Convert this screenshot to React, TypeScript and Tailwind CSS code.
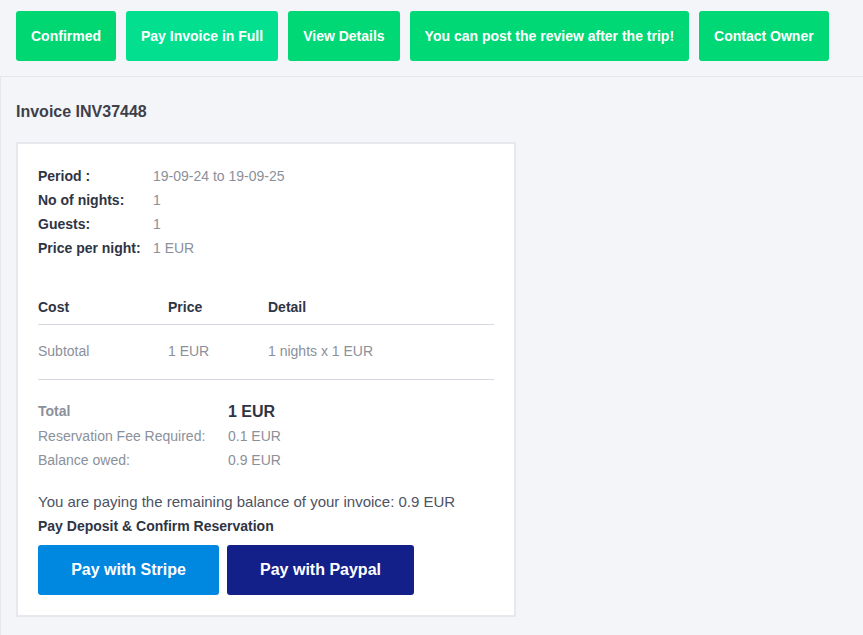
import React from 'react';

const topActions = [
  { label: 'Confirmed', tone: 'bg-[#00d672]' },
  { label: 'Pay Invoice in Full', tone: 'bg-[#02df8e]' },
  { label: 'View Details', tone: 'bg-[#00d775]' },
  { label: 'You can post the review after the trip!', tone: 'bg-[#00d775]' },
  { label: 'Contact Owner', tone: 'bg-[#00d775]' },
];

const details = [
  { label: 'Period :', value: '19-09-24 to 19-09-25' },
  { label: 'No of nights:', value: '1' },
  { label: 'Guests:', value: '1' },
  { label: 'Price per night:', value: '1 EUR' },
];

export default function App() {
  return (
    <div className="min-h-[635px] bg-[#f4f5f9] font-['Liberation_Sans',Arial,sans-serif] text-[14px]">
      <div className="flex gap-[10px] px-4 pt-[11px] pb-[15px] border-b border-[#e4e6eb]">
        {topActions.map(a => (
          <button
            key={a.label}
            className={`h-[50px] px-[15px] rounded-[3px] text-white font-bold text-[14px] ${a.tone}`}
          >
            {a.label}
          </button>
        ))}
      </div>

      <div className="border-l border-[#e6e8ee] pl-[15px] pr-4 pt-[23px] pb-5">
        <h2 className="text-[16px] leading-6 font-bold text-[#3d4049]">Invoice INV37448</h2>

        <div className="mt-[18px] w-[500px] bg-white border-2 border-[#e6e8ed] p-5">
          <div className="flex flex-col">
            {details.map(d => (
              <div key={d.label} className="flex leading-6">
                <span className="w-[115px] font-bold text-[#2f3444]">{d.label}</span>
                <span className="text-[#8b909a]">{d.value}</span>
              </div>
            ))}
          </div>

          <table className="mt-[30px] w-[456px] text-left border-collapse">
            <thead>
              <tr className="border-b border-[#d4d8df]">
                <th className="w-[130px] h-[34px] pt-[2px] font-bold text-[#2f3444]">Cost</th>
                <th className="w-[100px] h-[34px] pt-[2px] font-bold text-[#2f3444]">Price</th>
                <th className="h-[34px] pt-[2px] font-bold text-[#2f3444]">Detail</th>
              </tr>
            </thead>
            <tbody>
              <tr className="border-b border-[#d4d8df]">
                <td className="h-[55px] text-[#8b909a]">Subtotal</td>
                <td className="h-[55px] text-[#8b909a]">1 EUR</td>
                <td className="h-[55px] text-[#8b909a]">1 nights x 1 EUR</td>
              </tr>
            </tbody>
          </table>

          <div className="mt-[20px] flex flex-col text-[#8b909a]">
            <div className="flex items-center h-6">
              <span className="w-[190px] font-bold">Total</span>
              <span className="text-[16px] font-bold text-[#2f3444]">1 EUR</span>
            </div>
            <div className="flex items-center h-6 mt-[1px]">
              <span className="w-[190px]">Reservation Fee Required:</span>
              <span>0.1 EUR</span>
            </div>
            <div className="flex items-center h-6">
              <span className="w-[190px]">Balance owed:</span>
              <span>0.9 EUR</span>
            </div>
          </div>

          <p className="mt-[17px] leading-6 text-[15px] text-[#4d5363]">
            You are paying the remaining balance of your invoice: 0.9 EUR
          </p>
          <p className="leading-6 font-bold text-[#2f3444]">Pay Deposit &amp; Confirm Reservation</p>

          <div className="mt-[7px] flex gap-2">
            <button className="w-[181px] h-[50px] rounded-[3px] bg-[#0087e0] text-white font-bold text-[16px]">
              Pay with Stripe
            </button>
            <button className="w-[187px] h-[50px] rounded-[3px] bg-[#13208a] text-white font-bold text-[16px]">
              Pay with Paypal
            </button>
          </div>
        </div>
      </div>
    </div>
  );
}
